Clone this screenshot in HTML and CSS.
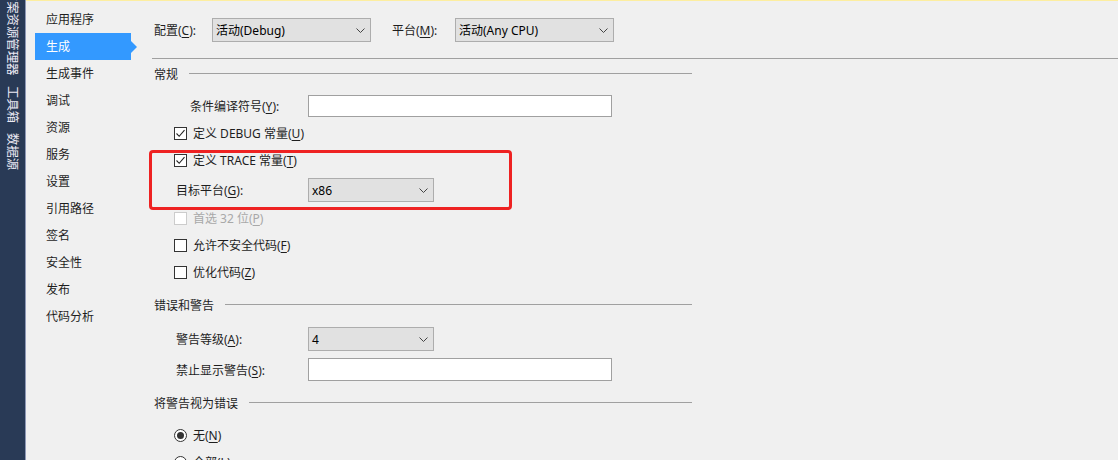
FILE: index.html
```html
<!DOCTYPE html>
<html lang="zh-CN">
<head>
    <meta charset="UTF-8">
    <title>项目属性 - 生成</title>
    <link rel="stylesheet" href="styles.css">
</head>
<body>
    <div class="side-tabs">
        <div class="side-tab first">解决方案资源管理器</div>
        <div class="side-tab">工具箱</div>
        <div class="side-tab">数据源</div>
    </div>

    <div class="window">
        <ul class="nav">
            <li>应用程序</li>
            <li class="active">生成</li>
            <li>生成事件</li>
            <li>调试</li>
            <li>资源</li>
            <li>服务</li>
            <li>设置</li>
            <li>引用路径</li>
            <li>签名</li>
            <li>安全性</li>
            <li>发布</li>
            <li>代码分析</li>
        </ul>

        <div class="main">
            <div class="top-row">
                <span class="top-label">配置(<u>C</u>):</span>
                <div class="combo combo-top">
                    <span>活动(Debug)</span>
                    <svg width="9" height="5" viewBox="0 0 9 5"><path d="M0.5 0.5 L4.5 4.5 L8.5 0.5" fill="none" stroke="#444" stroke-width="1"/></svg>
                </div>
                <span class="top-label platform">平台(<u>M</u>):</span>
                <div class="combo combo-top">
                    <span>活动(Any CPU)</span>
                    <svg width="9" height="5" viewBox="0 0 9 5"><path d="M0.5 0.5 L4.5 4.5 L8.5 0.5" fill="none" stroke="#444" stroke-width="1"/></svg>
                </div>
            </div>
            <div class="sep"></div>

            <div class="section">
                <div class="heading">常规</div>

                <div class="field field-wide sp-11">
                    <label>条件编译符号(<u>Y</u>):</label>
                    <div class="textbox"></div>
                </div>

                <div class="check sp-8">
                    <span class="box">
                        <svg width="11" height="11" viewBox="0 0 11 11"><path d="M1.5 5.5 L4.2 8.3 L9.5 2.2" fill="none" stroke="#222" stroke-width="1.1"/></svg>
                    </span>
                    <span>定义 DEBUG 常量(<u>U</u>)</span>
                </div>

                <div class="mark">
                    <div class="check check-short">
                        <span class="box">
                            <svg width="11" height="11" viewBox="0 0 11 11"><path d="M1.5 5.5 L4.2 8.3 L9.5 2.2" fill="none" stroke="#222" stroke-width="1.1"/></svg>
                        </span>
                        <span>定义 TRACE 常量(<u>T</u>)</span>
                    </div>
                    <div class="field sp-11">
                        <label>目标平台(<u>G</u>):</label>
                        <div class="combo combo-small">
                            <span>x86</span>
                            <svg width="9" height="5" viewBox="0 0 9 5"><path d="M0.5 0.5 L4.5 4.5 L8.5 0.5" fill="none" stroke="#444" stroke-width="1"/></svg>
                        </div>
                    </div>
                </div>

                <div class="check disabled">
                    <span class="box"></span>
                    <span>首选 32 位(<u>P</u>)</span>
                </div>
                <div class="check sp-11">
                    <span class="box"></span>
                    <span>允许不安全代码(<u>F</u>)</span>
                </div>
                <div class="check sp-11">
                    <span class="box"></span>
                    <span>优化代码(<u>Z</u>)</span>
                </div>

                <div class="heading sp-15">错误和警告</div>

                <div class="field sp-12">
                    <label>警告等级(<u>A</u>):</label>
                    <div class="combo combo-small">
                        <span>4</span>
                        <svg width="9" height="5" viewBox="0 0 9 5"><path d="M0.5 0.5 L4.5 4.5 L8.5 0.5" fill="none" stroke="#444" stroke-width="1"/></svg>
                    </div>
                </div>
                <div class="field sp-7">
                    <label>禁止显示警告(<u>S</u>):</label>
                    <div class="textbox"></div>
                </div>

                <div class="heading sp-12">将警告视为错误</div>

                <div class="check radio sp-14">
                    <span class="box"><span class="dot"></span></span>
                    <span>无(<u>N</u>)</span>
                </div>
                <div class="check radio sp-11">
                    <span class="box"></span>
                    <span>全部(<u>L</u>)</span>
                </div>
            </div>
        </div>
    </div>
</body>
</html>
```

FILE: styles.css
```css
body {
    margin: 0;
    height: 460px;
    overflow: hidden;
    display: flex;
    background-color: #f0f0f0;
    font-family: "Noto Sans", "Noto Sans CJK SC", sans-serif;
    font-size: 12px;
    color: #1e1e1e;
}

u {
    text-decoration-thickness: 1px;
    text-underline-offset: 2px;
}

/* 左侧停靠的竖排标签 */
.side-tabs {
    width: 25px;
    flex-shrink: 0;
    background-color: #293a56;
    border-right: 1px solid #8e98b6;
    display: flex;
    flex-direction: column;
    align-items: center;
    overflow: hidden;
}

.side-tab {
    writing-mode: vertical-rl;
    text-orientation: sideways;
    font-family: "Noto Sans CJK SC", sans-serif;
    font-size: 12.4px;
    color: #eceaf5;
    line-height: 14px;
    margin-bottom: 10px;
}

.side-tab.first {
    margin-top: -36px;
}

.window {
    flex: 1;
    display: flex;
    border-top: 1px solid #fdeea0;
    min-width: 0;
}

/* 属性页导航 */
.nav {
    list-style: none;
    margin: 0;
    padding: 5px 0 0 9px;
    width: 114px;
    box-sizing: border-box;
    flex-shrink: 0;
}

.nav li {
    height: 27px;
    line-height: 27px;
    width: 96px;
    padding-left: 11px;
    box-sizing: border-box;
    position: relative;
}

.nav li.active {
    background-color: #3399ff;
    color: #fff;
}

.nav li.active::after {
    content: "";
    position: absolute;
    right: -6px;
    top: 8px;
    border-left: 6px solid #3399ff;
    border-top: 6px solid transparent;
    border-bottom: 6px solid transparent;
}

.main {
    flex: 1;
    padding: 17px 0 0 12px;
    min-width: 0;
}

.top-row {
    display: flex;
    align-items: center;
    height: 24px;
    padding-left: 2px;
}

.top-label {
    width: 58px;
}

.top-label.platform {
    width: 63px;
    margin-left: 21px;
}

.combo {
    height: 24px;
    box-sizing: border-box;
    background-color: #e1e1e1;
    border: 1px solid #adadad;
    display: flex;
    align-items: center;
    justify-content: space-between;
    padding: 0 5px 0 3px;
    color: #000;
}

.combo-top {
    width: 159px;
}

.combo-small {
    width: 126px;
}

.sep {
    margin-top: 16px;
    border-top: 1px solid #a0a0a0;
}

.section {
    width: 540px;
}

.heading {
    height: 20px;
    margin-top: 5px;
    padding-left: 2px;
    display: flex;
    align-items: center;
}

.heading::after {
    content: "";
    flex: 1;
    margin-left: 11px;
    border-top: 1px solid #a0a0a0;
    margin-top: -1px;
}

.field {
    display: flex;
    align-items: center;
}

.field label {
    width: 156px;
    padding-left: 24px;
    box-sizing: border-box;
}

.field-wide label {
    padding-left: 38px;
}

.textbox {
    width: 304px;
    height: 23px;
    box-sizing: border-box;
    background-color: #fff;
    border: 1px solid #a0a0a0;
}

.field-wide .textbox {
    height: 22px;
}

.check {
    display: flex;
    align-items: center;
    height: 16px;
    padding-left: 22px;
}

.check-short {
    height: 14px;
}

.check .box {
    width: 13px;
    height: 13px;
    box-sizing: border-box;
    border: 1px solid #333;
    background-color: #fff;
    margin-right: 6px;
    display: flex;
    align-items: center;
    justify-content: center;
}

.check.disabled {
    color: #a8a8a8;
}

.check.disabled .box {
    border-color: #cccccc;
}

.radio .box {
    border-radius: 50%;
}

.radio .dot {
    width: 7px;
    height: 7px;
    border-radius: 50%;
    background-color: #333;
}

/* 截图上的红色标注框 */
.mark {
    margin: 9px 0 0 -3px;
    width: 363px;
    box-sizing: border-box;
    border: 3px solid #ee2222;
    border-radius: 4px;
    padding-bottom: 5px;
}

.sp-7 { margin-top: 7px; }
.sp-8 { margin-top: 8px; }
.sp-11 { margin-top: 11px; }
.sp-12 { margin-top: 12px; }
.sp-14 { margin-top: 14px; }
.sp-15 { margin-top: 15px; }
```
